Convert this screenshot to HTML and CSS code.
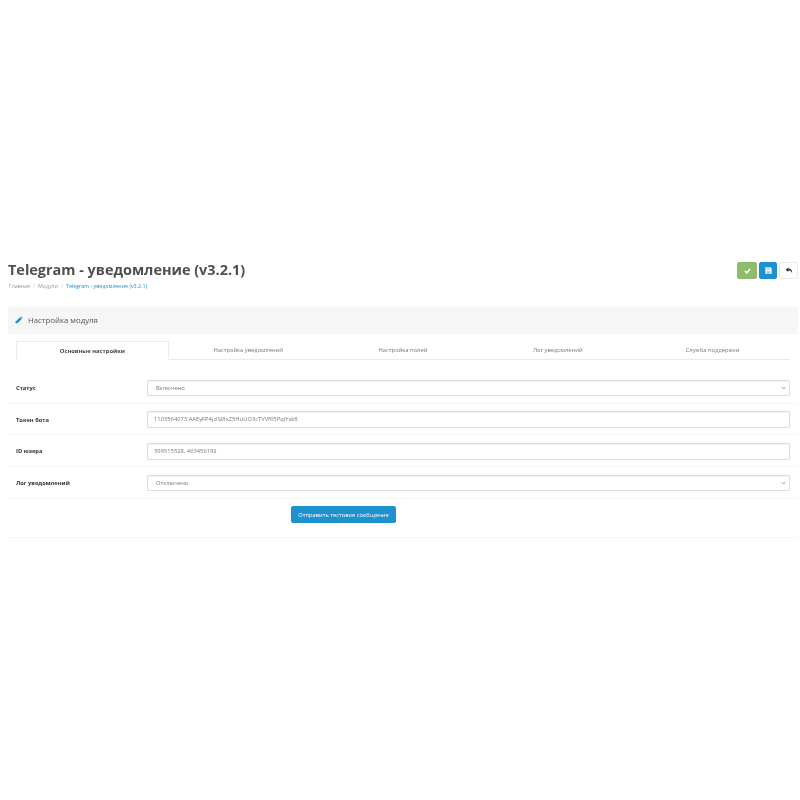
FILE: index.html
```html
<!DOCTYPE html>
<html lang="ru">
<head>
<meta charset="utf-8">
<title>Telegram - уведомление</title>
<link rel="stylesheet" href="styles.css">
</head>
<body>
<div class="page">
  <header class="page-header">
    <div class="titles">
      <h1>Telegram - уведомление (v3.2.1)</h1>
      <ul class="crumbs">
        <li>Главная</li>
        <li class="sep">/</li>
        <li>Модули</li>
        <li class="sep">/</li>
        <li class="current">Telegram - уведомление (v3.2.1)</li>
      </ul>
    </div>
    <div class="actions">
      <button class="act act-green" type="button" aria-label="Сохранить и остаться">
        <svg width="7" height="6" viewBox="0 0 10 9"><path d="M1 4.5l2.8 2.8L9 1.6" fill="none" stroke="#fff" stroke-width="2.2"/></svg>
      </button>
      <button class="act act-blue" type="button" aria-label="Сохранить">
        <svg width="7" height="7" viewBox="0 0 10 10"><path d="M0.5 0.5h7.5l1.5 1.5v7.5h-9z" fill="#fff"/><path d="M2.5 1h4v2.5h-4zM2.5 6h5v3h-5z" fill="#8fc6e8"/></svg>
      </button>
      <button class="act act-white" type="button" aria-label="Назад">
        <svg width="8" height="7" viewBox="0 0 10 9"><path d="M4.2 0.5L0.5 3.4l3.7 2.9V4.4c2.4 0 3.9 0.7 4.8 3.6 0.6-3.6-1.5-5.9-4.8-6z" fill="#333"/></svg>
      </button>
    </div>
  </header>

  <section class="panel">
    <div class="panel-heading">
      <svg class="pencil" width="8" height="8" viewBox="0 0 10 10"><path d="M0.5 9.5l0.6-2.8L6.6 1.2l2.2 2.2-5.5 5.5z" fill="#1e91cf"/><path d="M7.2 0.6l0.5-0.3 2 2-0.3 0.5z" fill="#1e91cf"/></svg>
      <span>Настройка модуля</span>
    </div>
    <div class="panel-body">
      <ul class="tabs">
        <li class="tab active">Основные настройки</li>
        <li class="tab">Настройка уведомлений</li>
        <li class="tab">Настройка полей</li>
        <li class="tab">Лог уведомлений</li>
        <li class="tab">Служба поддержки</li>
      </ul>
      <form class="form">
        <div class="row">
          <label class="lbl">Статус</label>
          <div class="field select"><span>Включено</span>
            <svg class="chev" width="5" height="4" viewBox="0 0 6 4"><path d="M0.5 0.7L3 3.2 5.5 0.7" fill="none" stroke="#888" stroke-width="1"/></svg>
          </div>
        </div>
        <div class="row">
          <label class="lbl">Токен бота</label>
          <div class="field"><span>1103564073:AAEyFP4jzISl8xZ5HuUO3cTVVf65PqlYsk8</span></div>
        </div>
        <div class="row">
          <label class="lbl">ID юзера</label>
          <div class="field"><span>399515528, 463456192</span></div>
        </div>
        <div class="row">
          <label class="lbl">Лог уведомлений</label>
          <div class="field select"><span>Отключено</span>
            <svg class="chev" width="5" height="4" viewBox="0 0 6 4"><path d="M0.5 0.7L3 3.2 5.5 0.7" fill="none" stroke="#888" stroke-width="1"/></svg>
          </div>
        </div>
        <div class="send-row">
          <button class="send" type="button">Отправить тестовое сообщение</button>
        </div>
      </form>
    </div>
  </section>
</div>
</body>
</html>
```
FILE: styles.css
```css
* { box-sizing: border-box; }
html, body { margin: 0; padding: 0; background: #fff; }
body { font-family: "Open Sans", "Noto Sans", sans-serif; color: #555; }
.page { padding: 262px 2px 20px 8px; width: 800px; filter: blur(0.35px); }

.page-header { display: flex; justify-content: space-between; align-items: flex-start; height: 45px; }
h1 { margin: 0; font-size: 14.45px; line-height: 16px; font-weight: 700; color: #4f4f4f; }
.crumbs { list-style: none; display: flex; gap: 2.5px; margin: 4px 0 0; padding: 0 0 0 1px; font-size: 5.3px; line-height: 9px; color: #999; }
.current { color: #1e91cf; }
.sep { color: #ccc; margin: 0 .5px; }

.actions { display: flex; gap: 2px; }
.act { width: 19px; height: 17px; padding: 0; border: 1px solid; border-radius: 2px; display: flex; align-items: center; justify-content: center; }
.act-green { width: 20px; background: #8fbb6c; border-color: #8fbb6c; }
.act-blue { width: 18px; background: #1e91cf; border-color: #1e91cf; }
.act-white { background: #fff; border-color: #eaeaea; }

.panel { height: 230px; background: #fff; box-shadow: 0 1px 1px rgba(0,0,0,.03), 0 0 1px rgba(0,0,0,.06); }
.panel-heading { height: 27px; padding: 0 0 1.5px 7px; background: #f6f6f6; display: flex; align-items: center; gap: 5px; font-size: 7.8px; color: #555; }
.panel-body { padding: 7px 8px 0; }

.tabs { list-style: none; margin: 0; padding: 0; display: grid; grid-template-columns: repeat(5, 1fr); height: 19px; border-bottom: 1px solid #eaeaea; }
.tab { font-size: 5.8px; line-height: 19px; text-align: center; color: #777; }
.tab.active { font-weight: 700; color: #444; background: #fff; border: 1px solid #eaeaea; border-bottom: 1px solid #fff; height: 19px; line-height: 18px; margin-right: 2px; }

.form { margin: 12px -8px 0; }
.row { display: flex; align-items: center; height: 31.7px; padding: 1px 8px 0; border-bottom: 1px solid #f5f5f5; }
.lbl { width: 131px; flex: none; font-size: 5.75px; font-weight: 700; color: #333; }
.field { flex: 1; height: 16.7px; border: 1px solid #ddd; box-shadow: inset 0 1px 1px rgba(0,0,0,.05); border-radius: 1px; font-size: 5.8px; line-height: 15px; padding: 0 6px; color: #777; display: flex; align-items: center; justify-content: space-between; }
.select { padding-left: 8px; padding-right: 3px; }
.select span { padding-top: 1.5px; }
.chev { flex: none; }

.send-row { padding: 7.2px 0 0 283px; }
.send { display: block; width: 105px; height: 17px; padding: 1px 0 0; background: #1e91cf; border: 1px solid #1e91cf; border-radius: 2px; color: #fff; font-family: inherit; font-size: 5.75px; }
```
